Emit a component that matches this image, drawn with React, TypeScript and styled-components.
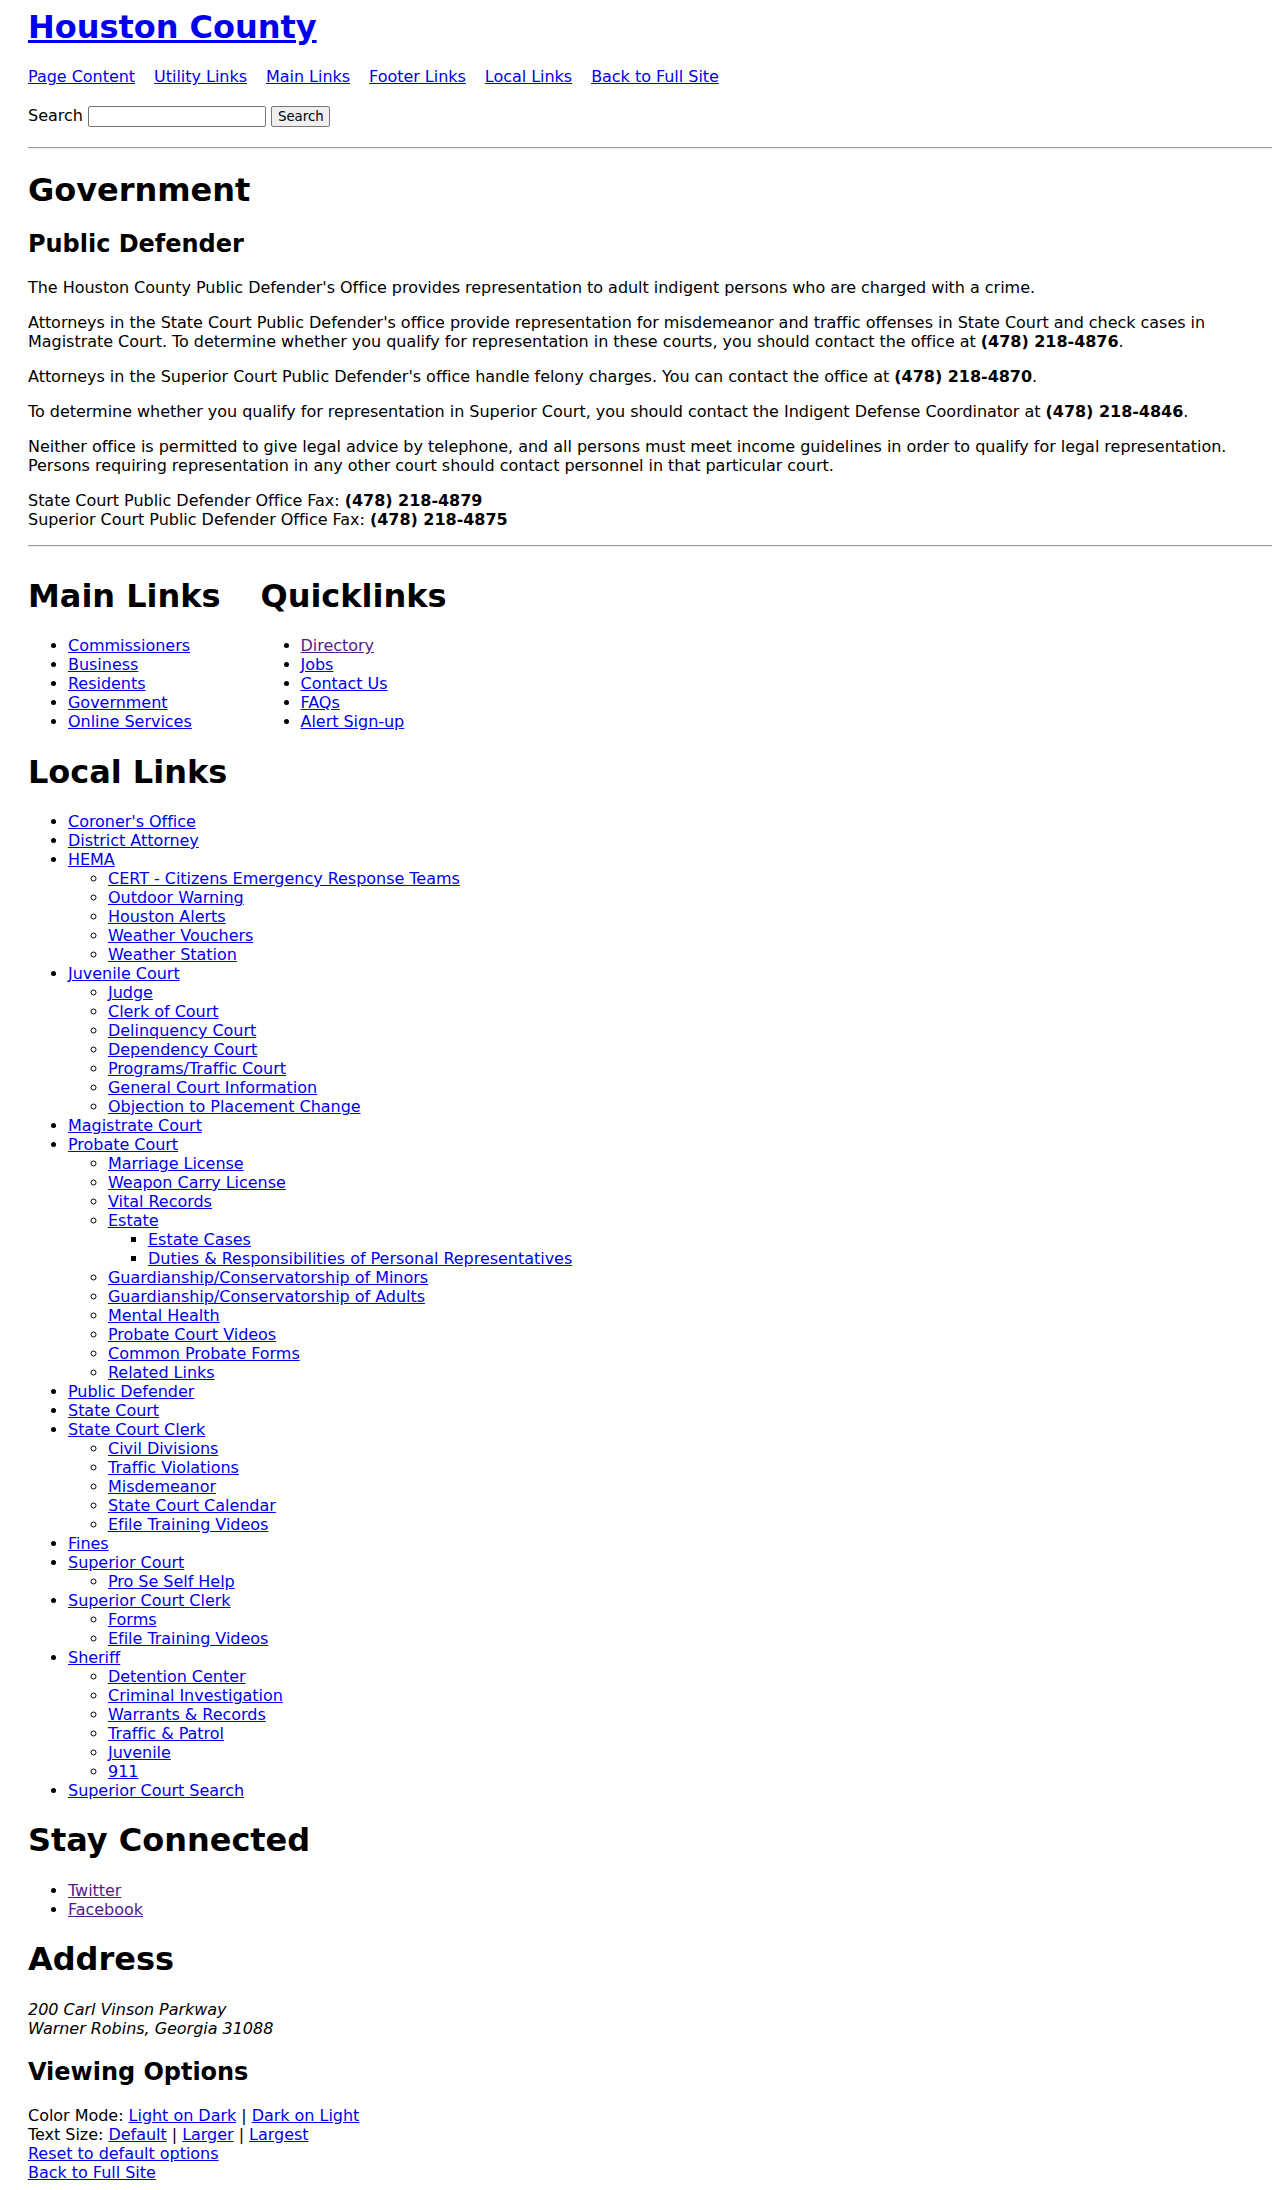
import React from "react";
import styled, { createGlobalStyle } from "styled-components";

const GlobalStyle = createGlobalStyle`
  body {
    margin: 8px;
    background: #fff;
    color: #000;
    font-family: "DejaVu Sans", "Liberation Sans", sans-serif;
    font-size: 16px;
    letter-spacing: -0.03px;
  }
`;

const Page = styled.div`
  padding: 0 0 0 20px;
`;

const Link = styled.a<{ $visited?: boolean }>`
  color: ${(p) => (p.$visited ? "#551a8b" : "#0000ee")};
  text-decoration: underline;
`;

const SiteTitle = styled.h1`
  margin: 0 0 21.44px;
  font-size: 32px;
  font-weight: bold;
`;

const SkipNav = styled.nav`
  display: flex;
  gap: 19px;
  margin: 0;
`;

const SearchForm = styled.form`
  margin: 20px 0 0;
  line-height: normal;
`;

const SearchInput = styled.input`
  box-sizing: border-box;
  width: 178px;
  height: 21px;
  padding: 1px 2px;
  border: 1px solid #767676;
  border-radius: 2px;
  font: 13.33px "DejaVu Sans", sans-serif;
  vertical-align: baseline;
`;

const SearchButton = styled.button`
  box-sizing: border-box;
  width: 59px;
  height: 21px;
  padding: 1px 6px;
  border: 1px solid #767676;
  border-radius: 2px;
  background: #efefef;
  color: #000;
  font: 13.33px "DejaVu Sans", sans-serif;
`;

const Rule = styled.hr<{ $top?: number }>`
  margin: ${(p) => p.$top ?? 8}px 0 8px;
  border: 0;
  border-top: 1px solid #9a9a9a;
  border-bottom: 1px solid #eeeeee;
  height: 0;
`;

const Heading = styled.h1`
  margin: 21.44px 0;
  font-size: 32px;
  font-weight: bold;
`;

const SubHeading = styled.h2`
  margin: 19.92px 0;
  font-size: 24px;
  font-weight: bold;
`;

const Paragraph = styled.p`
  margin: 16px 0;
`;

const Footer = styled.div`
  display: flow-root;
`;

const LinkColumns = styled.div`
  display: flex;
  gap: 40px;
  align-items: flex-start;
`;

const Column = styled.div``;

const LinkList = styled.ul<{ $flush?: boolean }>`
  margin: ${(p) => (p.$flush ? "16px 0 0" : "16px 0")};
  padding-left: 40px;

  ul {
    margin: 0;
    padding-left: 40px;
  }
`;

const Address = styled.address`
  font-style: italic;
`;

const Options = styled.div``;

type Item = { label: string; visited?: boolean; children?: Item[] };

const leaf = (...labels: string[]): Item[] => labels.map((label) => ({ label }));

const mainLinks = leaf("Commissioners", "Business", "Residents", "Government", "Online Services");

const quickLinks: Item[] = [
  { label: "Directory", visited: true },
  ...leaf("Jobs", "Contact Us", "FAQs", "Alert Sign-up"),
];

const localLinks: Item[] = [
  { label: "Coroner's Office" },
  { label: "District Attorney" },
  {
    label: "HEMA",
    children: leaf(
      "CERT - Citizens Emergency Response Teams",
      "Outdoor Warning",
      "Houston Alerts",
      "Weather Vouchers",
      "Weather Station"
    ),
  },
  {
    label: "Juvenile Court",
    children: leaf(
      "Judge",
      "Clerk of Court",
      "Delinquency Court",
      "Dependency Court",
      "Programs/Traffic Court",
      "General Court Information",
      "Objection to Placement Change"
    ),
  },
  { label: "Magistrate Court" },
  {
    label: "Probate Court",
    children: [
      ...leaf("Marriage License", "Weapon Carry License", "Vital Records"),
      {
        label: "Estate",
        children: leaf("Estate Cases", "Duties & Responsibilities of Personal Representatives"),
      },
      ...leaf(
        "Guardianship/Conservatorship of Minors",
        "Guardianship/Conservatorship of Adults",
        "Mental Health",
        "Probate Court Videos",
        "Common Probate Forms",
        "Related Links"
      ),
    ],
  },
  { label: "Public Defender" },
  { label: "State Court" },
  {
    label: "State Court Clerk",
    children: leaf(
      "Civil Divisions",
      "Traffic Violations",
      "Misdemeanor",
      "State Court Calendar",
      "Efile Training Videos"
    ),
  },
  { label: "Fines" },
  { label: "Superior Court", children: leaf("Pro Se Self Help") },
  { label: "Superior Court Clerk", children: leaf("Forms", "Efile Training Videos") },
  {
    label: "Sheriff",
    children: leaf(
      "Detention Center",
      "Criminal Investigation",
      "Warrants & Records",
      "Traffic & Patrol",
      "Juvenile",
      "911"
    ),
  },
  { label: "Superior Court Search" },
];

const renderItems = (items: Item[]) =>
  items.map((item, i) => (
    <li key={i}>
      <Link href="#" $visited={item.visited}>
        {item.label}
      </Link>
      {item.children && <ul>{renderItems(item.children)}</ul>}
    </li>
  ));

const App = () => {
  return (
    <Page>
      <GlobalStyle />
      <SiteTitle>
        <Link href="#">Houston County</Link>
      </SiteTitle>
      <SkipNav>
        <Link href="#">Page Content</Link>
        <Link href="#">Utility Links</Link>
        <Link href="#">Main Links</Link>
        <Link href="#">Footer Links</Link>
        <Link href="#">Local Links</Link>
        <Link href="#">Back to Full Site</Link>
      </SkipNav>
      <SearchForm onSubmit={(e) => e.preventDefault()}>
        <label htmlFor="q">Search</label> <SearchInput id="q" type="text" />{" "}
        <SearchButton type="submit">Search</SearchButton>
      </SearchForm>
      <Rule $top={20} />

      <Heading>Government</Heading>
      <SubHeading>Public Defender</SubHeading>
      <Paragraph>
        The Houston County Public Defender's Office provides representation to adult indigent
        persons who are charged with a crime.
      </Paragraph>
      <Paragraph>
        Attorneys in the State Court Public Defender's office provide representation for
        misdemeanor and traffic offenses in State Court and check cases in Magistrate Court. To
        determine whether you qualify for representation in these courts, you should contact the
        office at <strong>(478) 218-4876</strong>.
      </Paragraph>
      <Paragraph>
        Attorneys in the Superior Court Public Defender's office handle felony charges. You can
        contact the office at <strong>(478) 218-4870</strong>.
      </Paragraph>
      <Paragraph>
        To determine whether you qualify for representation in Superior Court, you should contact
        the Indigent Defense Coordinator at <strong>(478) 218-4846</strong>.
      </Paragraph>
      <Paragraph>
        Neither office is permitted to give legal advice by telephone, and all persons must meet
        income guidelines in order to qualify for legal representation. Persons requiring
        representation in any other court should contact personnel in that particular court.
      </Paragraph>
      <Paragraph>
        State Court Public Defender Office Fax: <strong>(478) 218-4879</strong>
        <br />
        Superior Court Public Defender Office Fax: <strong>(478) 218-4875</strong>
      </Paragraph>
      <Rule $top={16} />

      <Footer>
        <LinkColumns>
          <Column>
            <Heading>Main Links</Heading>
            <LinkList $flush>{renderItems(mainLinks)}</LinkList>
          </Column>
          <Column>
            <Heading>Quicklinks</Heading>
            <LinkList $flush>{renderItems(quickLinks)}</LinkList>
          </Column>
        </LinkColumns>

        <Heading>Local Links</Heading>
        <LinkList>{renderItems(localLinks)}</LinkList>

        <Heading>Stay Connected</Heading>
        <LinkList>
          {renderItems([
            { label: "Twitter", visited: true },
            { label: "Facebook", visited: true },
          ])}
        </LinkList>

        <Heading>Address</Heading>
        <Address>
          200 Carl Vinson Parkway
          <br />
          Warner Robins, Georgia 31088
        </Address>

        <SubHeading>Viewing Options</SubHeading>
        <Options>
          Color Mode: <Link href="#">Light on Dark</Link> | <Link href="#">Dark on Light</Link>
          <br />
          Text Size: <Link href="#">Default</Link> | <Link href="#">Larger</Link> |{" "}
          <Link href="#">Largest</Link>
          <br />
          <Link href="#">Reset to default options</Link>
          <br />
          <Link href="#">Back to Full Site</Link>
        </Options>
      </Footer>
    </Page>
  );
};

export default App;
